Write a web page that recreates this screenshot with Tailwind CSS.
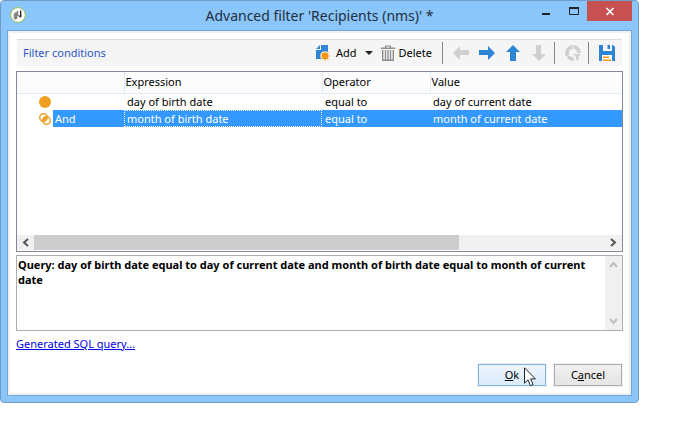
<!DOCTYPE html>
<html lang="en">
<head>
<meta charset="utf-8">
<meta name="viewport" content="width=device-width, initial-scale=1">
<title>Advanced filter</title>
<script src="https://cdn.jsdelivr.net/npm/@tailwindcss/browser@4"></script>
</head>
<body class="flex min-h-screen flex-col bg-white pr-10 pb-[41px] font-['Noto_Sans','Open_Sans',sans-serif] text-[11px] leading-4 text-black">
<main class="flex flex-1 flex-col rounded-[4px] border border-[#6f9dc8] bg-[#8bc6fa] px-1.5 pb-1.5">
  <header class="grid h-[29px] shrink-0 grid-cols-[1fr_auto_1fr] items-start">
    <div class="pt-1.5 pl-[3px]">
      <svg class="size-4" viewBox="0 0 16 16" aria-hidden="true"><circle cx="8" cy="8" r="7.4" fill="#fff" stroke="#8fc04a"/><path d="M3.500 6.500 6.500 4.500 7.500 5v6L5.500 13 3.500 11.500z" fill="#999"/><path d="M5.500 7h1v5h-1z" fill="#666"/><path d="M7 4h1.200v5H7z" fill="#777"/><path d="M10 3.500h1.300V9H10z" fill="#222"/><path d="M8 8.500h4L10.500 11z" fill="#333"/></svg>
    </div>
    <h1 class="pt-[5px] text-[14px] leading-5 text-[#1f2f3f]">Advanced filter 'Recipients (nms)' *</h1>
    <div class="flex justify-end">
      <button type="button" aria-label="Minimize" class="h-5 w-[27px]"><svg class="block h-5 w-[27px]" viewBox="0 0 27 20"><path d="M9 12h8v2H9z" fill="#222"/></svg></button>
      <button type="button" aria-label="Maximize" class="h-5 w-[27px]"><svg class="block h-5 w-[27px]" viewBox="0 0 27 20"><path d="M9.500 6.500h9v7h-9z" fill="none" stroke="#222"/><path d="M9 6h10v2H9z" fill="#222"/></svg></button>
      <button type="button" aria-label="Close" class="h-5 w-[45px] bg-[#c75050]"><svg class="block h-5 w-[45px]" viewBox="0 0 45 20"><path d="m19.500 7 7 7m0-7-7 7" stroke="#fff" stroke-width="1.700"/></svg></button>
    </div>
  </header>

  <section class="flex flex-1 flex-col border border-[#74a7d8] bg-white px-2 pt-2 pb-2 outline-2 -outline-offset-3 outline-[#f0f0f0]">
    <div class="mx-px flex h-[27px] items-center border-t border-[#dcdcdc] bg-[#f5f5f5] pr-[7px] pl-1.5">
      <h2 class="flex-1 text-[#2b57c4]">Filter conditions</h2>
      <div class="flex items-center" role="toolbar" aria-label="Filter actions">
        <button type="button" class="flex items-center gap-1.5"><svg class="h-4 w-3.5" viewBox="0 0 14 16" aria-hidden="true"><path d="M5 0h7v7H7v7H0V5h5z" fill="#2e85d5"/><path d="M0 4 4 0v4z" fill="#2e85d5"/><circle cx="9" cy="11" r="4.800" fill="#f5f5f5"/><path d="M9 6.200v9.600M4.200 11h9.600M5.600 7.600l6.800 6.800M12.400 7.600l-6.800 6.800" stroke="#f0a030" stroke-width="1.200"/><circle cx="9" cy="11" r="3.200" fill="#f0960f"/></svg><span>Add</span></button>
        <button type="button" aria-label="Add options" class="px-2"><svg class="block h-4 w-2" viewBox="0 0 8 16"><path d="M0 6h8L4 10z" fill="#222"/></svg></button>
        <button type="button" class="flex items-center gap-1"><svg class="h-4 w-3.5" viewBox="0 0 14 16" aria-hidden="true"><path d="M0 2.500h4V.5h6v2h4v1.500H0zm5.200 0h3.600v-1H5.200z" fill="#8d8d8d"/><path d="M1.700 5v10.300h10.600V5" fill="none" stroke="#8d8d8d" stroke-width="1.400"/><path d="M4.500 5v10M7 5v10M9.500 5v10" stroke="#8d8d8d" stroke-width="1.300"/></svg><span>Delete</span></button>
        <span class="mx-2.5 h-[22px] w-px bg-[#888]"></span>
        <button type="button" aria-label="Previous" class="mr-2.5"><svg class="block size-4" viewBox="0 0 16 16"><path d="M0 8 7 1v4h9v5H7v5z" fill="#cfcfcf"/></svg></button>
        <button type="button" aria-label="Next" class="mr-2.5"><svg class="block size-4" viewBox="0 0 16 16"><path d="M16 8 9 1v4H0v5h9v5z" fill="#2e85d5"/></svg></button>
        <button type="button" aria-label="Move up" class="mr-2.5"><svg class="block size-4" viewBox="0 0 16 16"><path d="m8 0 7 7h-4v9H5V7H1z" fill="#2e85d5"/></svg></button>
        <button type="button" aria-label="Move down" class="mr-[7px]"><svg class="block size-4" viewBox="0 0 16 16"><path d="M8 16 1 9h4V0h5v9h5z" fill="#cfcfcf"/></svg></button>
        <span class="mr-2.5 h-[22px] w-px bg-[#888]"></span>
        <button type="button" aria-label="Distribution of values" class="mr-[7px]"><svg class="block size-4" viewBox="0 0 16 16"><circle cx="8" cy="8" r="6" fill="none" stroke="#cfcfcf" stroke-width="3.800"/><path d="M8 0v5M1 12l4-2" stroke="#f5f5f5"/><path d="M7.500 8H16v8H9z" fill="#f5f5f5"/><path d="M8.500 9H16l-2.500 3v4L11 14.500V12z" fill="#cfcfcf"/></svg></button>
        <span class="mr-2.5 h-[22px] w-px bg-[#888]"></span>
        <button type="button" aria-label="Save"><svg class="block size-4" viewBox="0 0 16 16"><path d="M0 0h4v6h9V0h1l2 2v14h-3v-6H3v6H0z" fill="#2e85d5"/><path d="M5 0h7v5H5z" fill="#f5f5f5"/><path d="M8.500 0H11v4H8.500z" fill="#2e85d5"/><path d="M3 10h10v6H3z" fill="#fff"/><path d="M4 11.500h6V13H4zm0 3h8V16H4z" fill="#f0960f"/></svg></button>
      </div>
    </div>

    <div class="mt-[5px] flex min-h-32 flex-1 flex-col border border-[#82879a]">
      <table class="w-full table-fixed border-collapse text-left">
        <colgroup><col class="w-9"><col class="w-[71px]"><col class="w-[198px]"><col class="w-[108px]"><col></colgroup>
        <thead>
          <tr class="h-[21px] border-b border-[#e0ebf8] bg-[#fcfcfc]">
            <th colspan="2" aria-label="Link" class="border-r border-[#e0ebf8]"></th>
            <th class="border-r border-[#e0ebf8] px-px font-normal">Expression</th>
            <th class="border-r border-[#e0ebf8] px-px font-normal">Operator</th>
            <th class="px-px font-normal">Value</th>
          </tr>
        </thead>
        <tbody>
          <tr class="h-[17px]">
            <td class="pl-[22px]"><svg class="block size-3" viewBox="0 0 12 12" aria-hidden="true"><circle cx="6" cy="6" r="6" fill="#f0a020"/></svg></td>
            <td></td>
            <td class="pl-[3px]">day of birth date</td>
            <td class="pl-[3px]">equal to</td>
            <td class="pl-[3px]">day of current date</td>
          </tr>
          <tr class="h-[17px] text-white">
            <td class="pl-[22px]"><svg class="block size-3" viewBox="0 0 12 12" aria-hidden="true"><path d="M3.800 7.900A4 4 0 0 1 7.900 3.800 4 4 0 0 1 3.800 7.900z" fill="#f0a020"/><circle cx="4.500" cy="4.500" r="3.800" fill="none" stroke="#f0a020" stroke-width="1.400"/><circle cx="7.500" cy="7.500" r="3.800" fill="none" stroke="#f0a020" stroke-width="1.400"/></svg></td>
            <td class="bg-[#3399ff] pl-0.5">And</td>
            <td class="bg-[#3399ff] pl-[3px] outline-1 -outline-offset-1 outline-dotted outline-white">month of birth date</td>
            <td class="bg-[#3399ff] pl-[3px]">equal to</td>
            <td class="bg-[#3399ff] pl-[3px]">month of current date</td>
          </tr>
        </tbody>
      </table>
      <div class="mt-auto mb-px flex h-[15px] bg-[#f0f0f0]">
        <button type="button" aria-label="Scroll left" class="w-[17px]"><svg class="block h-[15px] w-[17px]" viewBox="0 0 17 15"><path d="M11 4 7 7.500l4 3.500" fill="none" stroke="#555" stroke-width="2"/></svg></button>
        <div class="flex-1"><div class="h-full w-[74.5%] bg-[#cdcdcd]"></div></div>
        <button type="button" aria-label="Scroll right" class="w-[17px]"><svg class="block h-[15px] w-[17px]" viewBox="0 0 17 15"><path d="m6 4 4 3.500L6 11" fill="none" stroke="#555" stroke-width="2"/></svg></button>
      </div>
    </div>

    <div class="mt-[3px] flex h-[76px] border border-[#abadb3]">
      <textarea readonly aria-label="Query" class="flex-1 resize-none overflow-hidden px-px pt-px leading-[15px] font-bold outline-none">Query: day of birth date equal to day of current date and month of birth date equal to month of current date</textarea>
      <div class="flex w-[17px] flex-col justify-between bg-[#f0f0f0]">
        <svg class="h-[17px] w-[17px]" viewBox="0 0 17 17" aria-hidden="true"><path d="m5 11 3.500-4 3.500 4" fill="none" stroke="#bfbfbf" stroke-width="2"/></svg>
        <svg class="h-[17px] w-[17px]" viewBox="0 0 17 17" aria-hidden="true"><path d="m5 6 3.500 4L12 6" fill="none" stroke="#bfbfbf" stroke-width="2"/></svg>
      </div>
    </div>

    <a href="#" class="mt-[5px] self-start text-[#0000ee] underline">Generated SQL query...</a>

    <div class="mt-3 flex justify-end gap-2 pb-px">
      <button type="button" class="relative h-[22px] w-[68px] border border-[#7eb4ea] bg-linear-to-b from-[#ecf4fc] to-[#dcecfc] outline-1 outline-[#f0f0f0]"><span class="underline">O</span>k
        <svg class="absolute top-0.5 left-[45px] z-10 h-5 w-3" viewBox="0 0 12 20" aria-hidden="true"><path d="M.5.800v15.400l3.500-3.300 2.500 5.800 2.600-1.100-2.500-5.700h4.800z" fill="#fff" stroke="#222"/></svg>
      </button>
      <button type="button" class="mr-px h-[22px] w-[68px] border border-[#acacac] bg-linear-to-b from-[#f0f0f0] to-[#e5e5e5] outline-1 outline-[#f0f0f0]">C<span class="underline">a</span>ncel</button>
    </div>
  </section>
</main>
</body>
</html>
